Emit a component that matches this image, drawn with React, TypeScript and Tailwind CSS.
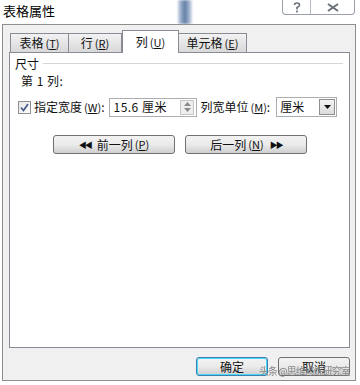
import React from 'react';

const font = { fontFamily: '"Noto Sans CJK SC", "Noto Sans", sans-serif' };

const Key = ({ k }: { k: string }) => (
  <span className="ml-[2px] text-[11px]">
    (<span className="underline">{k}</span>)
  </span>
);

const Tab = ({ label, k, active, w }: { label: string; k: string; active?: boolean; w: string }) =>
  active ? (
    <div
      className={`${w} h-[23px] -mb-px z-10 bg-white border border-b-0 border-[#898c95] flex items-center justify-center text-[12px] text-[#111]`}
    >
      {label}
      <Key k={k} />
    </div>
  ) : (
    <div
      className={`${w} h-[19px] bg-gradient-to-b from-[#f2f2f2] to-[#d9d9d9] border border-b-0 border-[#898c95] -ml-px first:ml-0 flex items-center justify-center text-[12px] text-[#111]`}
    >
      {label}
      <Key k={k} />
    </div>
  );

const Btn = ({ children, w, focus }: { children: React.ReactNode; w: string; focus?: boolean }) => (
  <div
    className={`${w} h-[19px] rounded-[3px] border ${
      focus ? 'border-[#3c7fb1] shadow-[inset_0_0_0_1px_#48d8fb]' : 'border-[#707070]'
    } bg-gradient-to-b from-[#f2f2f2] via-[#ebebeb] to-[#cfcfcf] flex items-center justify-center text-[12px] text-[#111]`}
  >
    {children}
  </div>
);

export default function App() {
  return (
    <div className="relative w-[360px] h-[385px] bg-white overflow-hidden" style={font}>
      {/* blurred window behind */}
      <div className="absolute left-[178px] top-0 w-[14px] h-[24px] bg-gradient-to-r from-[#c8d4e4] via-[#5f7ba3] to-[#d5dfec] blur-[1px]" />

      {/* title bar */}
      <div className="relative h-[24px] flex items-start justify-between">
        <div className="pl-[3px] pt-[1px] text-[13px] text-black">表格属性</div>
        <div className="mr-[5px] w-[73px] h-[15px] rounded-b-[4px] border border-t-0 border-[#9aa0aa] bg-white flex">
          <div className="w-[28px] flex items-center justify-center border-r border-[#b5bac2]">
            <svg width="8" height="11" viewBox="0 0 8 11">
              <path d="M1.5 3 Q1.5 1 4 1 Q6.5 1 6.5 3 Q6.5 4.5 4 5.5 L4 7.5" stroke="#6a6f78" strokeWidth="1.6" fill="none" />
              <rect x="3.1" y="8.6" width="1.8" height="1.8" fill="#6a6f78" />
            </svg>
          </div>
          <div className="flex-1 flex items-center justify-center">
            <svg width="12" height="9" viewBox="0 0 12 9">
              <path d="M1 1 L11 8 M11 1 L1 8" stroke="#6a6f78" strokeWidth="2" fill="none" />
            </svg>
          </div>
        </div>
      </div>

      {/* dialog frame */}
      <div className="relative ml-[2px] w-[354px] h-[357px] border border-[#8e8e8e] bg-[#f0f0f0] flex flex-col">
        <div className="ml-[6px] mt-[5px] w-[341px] flex flex-col">
          <div className="flex items-end h-[22px] pl-[1px]">
            <Tab label="表格" k="T" w="w-[59px]" />
            <Tab label="行" k="R" w="w-[54px]" />
            <Tab label="列" k="U" w="w-[57px]" active />
            <Tab label="单元格" k="E" w="w-[69px]" />
          </div>
          <div className="h-[296px] bg-white border border-[#898c95] text-[12px] text-[#111]">
            <div className="flex items-center pl-[5px] pt-[3px] h-[18px]">
              <span>尺寸</span>
              <div className="flex-1 ml-[4px] mr-[6px] h-px bg-[#d5d5d5]" />
            </div>
            <div className="pl-[11px] pt-[1px] h-[20px] tracking-[0.5px]">第 1 列:</div>
            <div className="flex items-center pl-[8px] mt-[6px] h-[20px]">
              <div className="w-[13px] h-[13px] border border-[#8f8f8f] bg-gradient-to-br from-[#e6e6e6] to-white flex items-center justify-center">
                <svg width="9" height="9" viewBox="0 0 9 9">
                  <path d="M1 4.5 L3.5 7.5 L8 1" stroke="#4a5f8a" strokeWidth="1.8" fill="none" />
                </svg>
              </div>
              <span className="ml-[3px]">
                指定宽度<Key k="W" />:
              </span>
              <div className="ml-[5px] w-[88px] h-[19px] border border-[#abadb3] flex items-center">
                <span className="pl-[3px] flex-1 tracking-[0.5px]">15.6 厘米</span>
                <div className="w-[14px] h-[15px] mr-[2px] border border-[#c5c5c5] bg-[#eeeeee] flex flex-col items-center justify-center gap-[2px]">
                  <svg width="7" height="4" viewBox="0 0 7 4"><path d="M0 4 L3.5 0 L7 4 Z" fill="#8a8a8a" /></svg>
                  <svg width="7" height="4" viewBox="0 0 7 4"><path d="M0 0 L3.5 4 L7 0 Z" fill="#8a8a8a" /></svg>
                </div>
              </div>
              <span className="ml-[3px]">
                列宽单位<Key k="M" />:
              </span>
              <div className="ml-[6px] w-[61px] h-[20px] border border-[#abadb3] flex items-center">
                <span className="pl-[3px] flex-1">厘米</span>
                <div className="w-[16px] h-[16px] mr-[1px] border border-[#8e8f8f] bg-gradient-to-b from-[#f4f4f4] to-[#dcdcdc] flex items-center justify-center">
                  <svg width="7" height="4" viewBox="0 0 7 4"><path d="M0 0 L3.5 4 L7 0 Z" fill="#111" /></svg>
                </div>
              </div>
            </div>
            <div className="flex pl-[43px] gap-[10px] mt-[18px]">
              <Btn w="w-[122px]">
                <span className="text-[8px] mr-[6px] tracking-[-2px]">◀◀</span>
                前一列<Key k="P" />
              </Btn>
              <Btn w="w-[122px]">
                后一列<Key k="N" />
                <span className="text-[8px] ml-[6px] tracking-[-2px]">▶▶</span>
              </Btn>
            </div>
          </div>
        </div>
        <div className="flex justify-end gap-[10px] pr-[5px] mt-[9px]">
          <Btn w="w-[72px]" focus>
            确定
          </Btn>
          <Btn w="w-[72px]">取消</Btn>
        </div>
      </div>

      {/* watermark */}
      <div className="absolute left-[259px] top-[366px] whitespace-nowrap text-[10px] leading-none text-[#7e7e7e] opacity-90 tracking-[-1px]">
        头条 @思维修炼研究室
      </div>
    </div>
  );
}
